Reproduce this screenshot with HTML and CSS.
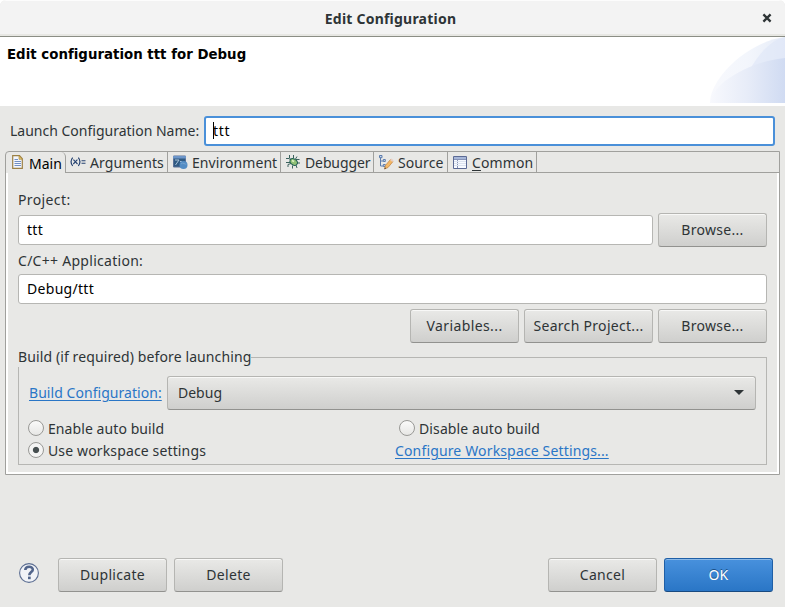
FILE: index.html
```html
<!DOCTYPE html>
<html lang="en">
<head>
<meta charset="utf-8">
<title>Edit Configuration</title>
<link rel="stylesheet" href="styles.css">
</head>
<body>
<div class="dialog">
  <header class="titlebar">
    <span class="window-title">Edit Configuration</span>
    <svg class="close" width="10" height="10" viewBox="0 0 10 10"><path d="M1.4 1.4 8.6 8.6M8.6 1.4 1.4 8.6" stroke="#2e3436" stroke-width="2.3"/></svg>
  </header>
  <section class="banner">
    <h1>Edit configuration ttt for Debug</h1>
    <svg class="swoosh" width="75" height="66" viewBox="0 0 75 66">
      <defs>
        <linearGradient id="g1"><stop offset="0" stop-color="#f8f9fd"/><stop offset=".5" stop-color="#f3f6fc"/><stop offset="1" stop-color="#e6ecf8"/></linearGradient>
        <linearGradient id="g2"><stop offset="0" stop-color="#f8f9fd"/><stop offset=".5" stop-color="#e7ecf8"/><stop offset="1" stop-color="#d0dbf2"/></linearGradient>
      </defs>
      <path d="M0 66C0 40 40 4 75 0V66Z" fill="url(#g1)"/>
      <path d="M42 29C51 14 62 3 75 0V30Z" fill="#dfe6f7" opacity=".65"/>
      <path d="M0 66C4 54 8 50 15 44C34 30 55 23 75 21V66Z" fill="url(#g2)"/>
    </svg>
  </section>
  <div class="name-row">
    <label class="w-name">Launch Configuration Name:</label>
    <div class="entry focused"><i class="caret"></i>ttt</div>
  </div>
  <main class="folder">
    <nav class="tabs">
      <div class="tab active t1">
        <svg width="12" height="15" viewBox="0 0 12 15"><path d="M.7.7H7.5L10.3 3.8V13.3H.7Z" fill="#f4f7fd" stroke="#9c8145" stroke-width="1.2"/><path d="M7 .7V4.3h3.3Z" fill="#e7c568" stroke="#ad8d43" stroke-width=".7"/><path d="M2.5 4.5H6M2.5 6.5H9M2.5 8.5H9M2.5 10.5H9" stroke="#718fc3"/></svg>
        <span>Main</span></div>
      <div class="tab t2">
        <svg width="16" height="11" viewBox="0 0 16 11"><path d="M2.7.7Q-.6 4.6 2.7 9M8.3.7Q11.6 4.6 8.3 9" fill="none" stroke="#254271" stroke-width="1.2"/><path d="M3.4 2.7 7.5 7M7.4 2.7 3.3 7M11.5 3.8H15.5M11.5 6.2H15.5" stroke="#254271" stroke-width="1.1"/></svg>
        <span>Arguments</span></div>
      <div class="tab t3">
        <svg width="16" height="15" viewBox="0 0 16 15"><path d="M1.5 1H13.5V12H1.5Z" fill="#315b83" stroke="#5b7197"/><path d="M1 1H14V3.5H1Z" fill="#6c95c9"/><path d="M3 5H7L3.5 10M8 6.5h2" stroke="#a8c1d8" fill="none"/><circle cx="11.5" cy="10" r="4" fill="#538cc4"/><path d="M9 9q1.5-1.5 3-.5t2.5.5" stroke="#76a4cf" fill="none"/></svg>
        <span>Environment</span></div>
      <div class="tab t4">
        <svg width="16" height="16" viewBox="0 0 16 16"><path d="M4.5 1v3l2 2M8.5 1v3M12 2.5 10.5 5M1 4.5h3l2 2M1 8.5h4M3 13v-2.500l3-1M7.500 11.500v3M14.500 5.500h-3.500M15 9h-3M11 11l1 3" stroke="#3b625e" stroke-width="1" fill="none"/><ellipse cx="8.7" cy="8" rx="4" ry="2.900" transform="rotate(35 8.7 8)" fill="#8fc077" stroke="#205d51" stroke-width="1"/><path d="M7 6.500l2 1" stroke="#e1f0c2" stroke-width="1.500"/></svg>
        <span>Debugger</span></div>
      <div class="tab t5">
        <svg width="16" height="16" viewBox="0 0 16 16"><path d="M2.5 3V12H5M2.5 7H5" stroke="#5c7cad" fill="none"/><path d="M1.500 1.500H4V3.700H1.500ZM5.300 5.500h2v2h-2ZM5.300 10.500h2v2h-2Z" fill="#c9d9ef" stroke="#5c7cad"/><path d="M6.5 15 7.4 11.5 12.5 5.5 15 7.5 10 13.5Z" fill="#f3b866" stroke="#c68645" stroke-width=".8"/><path d="M12 6l1.5-1.5 2 1.7L14.5 8Z" fill="#e8cfc5"/><path d="M6.3 15.2l.7-2 1.2 1.2Z" fill="#554b40"/></svg>
        <span>Source</span></div>
      <div class="tab t6">
        <svg width="15" height="13" viewBox="0 0 15 13"><path d="M.5.5H13.5V12.5H.5Z" fill="#f8faff" stroke="#5c6a94"/><path d="M1 1H13V3H1Z" fill="#a6b6d8"/><path d="M1 3.5H13M4.5 3V12" stroke="#8794b8"/><path d="M1 5.5H13M1 7.5H13M1 9.5H13" stroke="#dce3ef"/></svg>
        <span><u>C</u>ommon</span></div>
      <div class="tab-rest"></div>
    </nav>
    <div class="panel">
      <div class="caption"><span class="w-project">Project:</span></div>
      <div class="row project-row"><div class="entry">ttt</div><button>Browse...</button></div>
      <div class="caption app-caption"><span class="w-app">C/C++ Application:</span></div>
      <div class="entry">Debug/ttt</div>
      <div class="row actions"><button class="w-var">Variables...</button><button class="wide">Search Project...</button><button>Browse...</button></div>
      <fieldset class="group">
        <legend>Build (if required) before launching</legend>
        <div class="row config"><a class="w-build">Build Configuration:</a><div class="combo"><span>Debug</span><svg width="10" height="5" viewBox="0 0 10 5"><path d="M0 0H10L5 5Z" fill="#2e3436"/></svg></div></div>
        <div class="radios">
          <label><i class="radio"></i><span class="w-enable">Enable auto build</span></label>
          <label class="second"><i class="radio"></i><span class="w-disable">Disable auto build</span></label>
          <label><i class="radio on"></i><span class="w-use">Use workspace settings</span></label>
          <a class="w-ws">Configure Workspace Settings...</a>
        </div>
      </fieldset>
    </div>
  </main>
  <footer class="footer">
    <svg class="help" width="22" height="22" viewBox="0 0 22 22"><circle cx="11" cy="11" r="9.4" fill="#f1f3f7" stroke="#5b6d91" stroke-width="1.1"/><path d="M7.3 8C7.5 3.800 14.900 3.800 14.800 7.700C14.700 10 11.300 10.200 11.300 13.200" fill="none" stroke="#52658b" stroke-width="2.6"/><path d="M10 14.600h2.700v2.600H10Z" fill="#52658b"/></svg>
    <button>Duplicate</button><button>Delete</button>
    <span class="spacer"></span>
    <button>Cancel</button><button class="primary">OK</button>
  </footer>
</div>
</body>
</html>
```
FILE: styles.css
```css
* { box-sizing: border-box; }
body { margin: 0; background: #fff; font: 14px/20px "Noto Sans", "Liberation Sans", sans-serif; color: #2e3436; }
.dialog { width: 785px; height: 607px; background: #e8e8e6; border-radius: 6px 6px 0 0; overflow: hidden; display: flex; flex-direction: column; }
.titlebar { height: 37px; flex: none; background: linear-gradient(#fcfcfc 0 1px, #f3f3f3 1px 34px, #e7e7e3 34px); border-bottom: 1px solid #8b8e85; display: grid; grid-template-columns: 1fr auto 1fr; align-items: center; padding: 1px 13px 0 9px; }
.window-title { grid-column: 2; font-weight: 700; white-space: nowrap; letter-spacing: .22px; }
.close { justify-self: end; position: relative; top: -1px; }
.banner { height: 69px; flex: none; background: #fff; display: flex; justify-content: space-between; }
h1 { margin: 8px 0 0 7px; font: bold 13.33px/20px "DejaVu Sans", sans-serif; color: #000; letter-spacing: .02px; }
.name-row { display: flex; align-items: center; height: 30px; margin: 10px 10px 5px; gap: 5px; flex: none; }
.name-row label { width: 189px; flex: none; }
.entry { flex: 1; height: 30px; background: #fff; border: 1px solid #b6b6b3; border-radius: 3px; padding: 4px 8px; color: #000; letter-spacing: .3px; }
.focused { border: 2px solid #4a90d9; padding: 3px 7px; position: relative; letter-spacing: .7px; }
.caret { position: absolute; left: 7px; top: 4px; width: 1px; height: 17px; background: #000; }
label, a, span, button, legend { white-space: nowrap; }

.folder { margin: 0 5px; width: 775px; height: 324px; flex: none; border: 1px solid #a0a09d; border-radius: 4px 0 0 0; }
.tabs { height: 21px; display: flex; }
.tab { border-right: 1px solid #a0a09d; border-bottom: 1px solid #a0a09d; display: flex; align-items: center; gap: 4px; flex: none; padding-left: 4px; }
.tab svg { flex: none; }
.tab span { padding-top: 1px; line-height: 19px; }
.active { border-bottom: 0; border-radius: 0 5px 0 0; color: #000; }
.t1 { width: 60px; padding-left: 6px; gap: 5px; }
.t2 { width: 102px; letter-spacing: .07px; }
.t3 { width: 113px; letter-spacing: .07px; }
.t4 { width: 93px; letter-spacing: -.12px; }
.t5 { width: 74px; letter-spacing: .1px; }
.t6 { width: 89px; padding-left: 5px; letter-spacing: .12px; }
.tab-rest { flex: 1; border-bottom: 1px solid #a0a09d; }
u { text-underline-offset: 2px; }

.panel { height: 301px; border: solid #fff; border-width: 0 2px 2px; padding: 17px 10px 0; }
.caption { height: 20px; }
.row { display: flex; align-items: center; }
.project-row { height: 34px; gap: 5px; margin-top: 3px; }
.app-caption { margin-top: 4px; height: 23px; }
.w-project { letter-spacing: .38px; }
.w-app { letter-spacing: .28px; }
.actions { justify-content: flex-end; gap: 5px; margin-top: 5px; }
button { width: 109px; height: 34px; padding: 0; flex: none; font: inherit; letter-spacing: .3px; color: #2e3436; border: 1px solid #b5b5b2; border-bottom-color: #92928f; border-radius: 3px; background: linear-gradient(#e9e9e7, #cfcfcd); box-shadow: inset 0 1px #f8f8f7; }
.w-var { letter-spacing: .4px; }
.wide { width: 129px; }
.primary { color: #fff; background: linear-gradient(#4891dd, #2a76c6); border-color: #1f5fa6; border-bottom-color: #184a80; box-shadow: inset 0 1px #8bb9e8; text-shadow: 0 -1px #1c5187; }

.group { margin: 4px 0 0; padding: 0 10px; border: 1px solid #b6b6b3; height: 118px; min-width: 0; }
legend { padding: 0; margin-left: -11px; line-height: 20px; letter-spacing: .11px; }
.config { gap: 5px; margin-top: 9px; }
a { color: #2a76c6; text-decoration: underline; text-underline-offset: 2px; }
.config a { width: 133px; flex: none; letter-spacing: .05px; }
.combo { flex: 1; height: 34px; display: flex; align-items: center; justify-content: space-between; padding: 0 11px 1px 10px; border: 1px solid #b5b5b2; border-bottom-color: #92928f; border-radius: 3px; background: linear-gradient(#e9e9e7, #cfcfcd); box-shadow: inset 0 1px #f8f8f7; }
.radios { display: grid; grid-template-columns: 366px 1fr; grid-auto-rows: 22px; align-items: center; margin-top: 8px; }
.radios label { display: flex; align-items: center; gap: 4px; margin-left: -1px; }
.radios .second { margin-left: 4px; }
.radio { width: 16px; height: 16px; border: 1px solid #999996; border-radius: 50%; background: linear-gradient(#fafafa, #e7e7e5); flex: none; position: relative; top: -1px; }
.on { background: radial-gradient(circle, #474f50 0 2.7px, #f4f4f3 3.6px); }
.w-enable { letter-spacing: .08px; }
.w-disable { letter-spacing: .12px; }
.w-use { letter-spacing: .14px; }
.w-ws { letter-spacing: .15px; }

.footer { display: flex; align-items: center; height: 34px; margin: 83px 12px 0 18px; gap: 7px; flex: none; }
.help { margin-right: 11px; margin-top: -4px; flex: none; }
.spacer { flex: 1; }
```
